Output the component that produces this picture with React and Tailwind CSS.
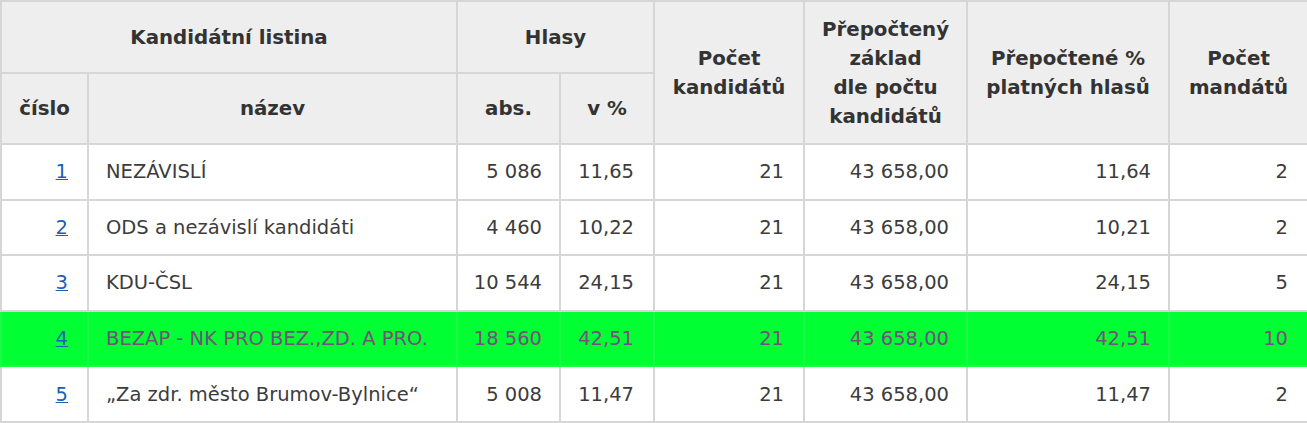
const rows = [
  { cislo: "1", nazev: "NEZÁVISLÍ", abs: "5 086", pct: "11,65", kand: "21", zaklad: "43 658,00", prep: "11,64", mand: "2" },
  { cislo: "2", nazev: "ODS a nezávislí kandidáti", abs: "4 460", pct: "10,22", kand: "21", zaklad: "43 658,00", prep: "10,21", mand: "2" },
  { cislo: "3", nazev: "KDU-ČSL", abs: "10 544", pct: "24,15", kand: "21", zaklad: "43 658,00", prep: "24,15", mand: "5" },
  { cislo: "4", nazev: "BEZAP - NK PRO BEZ.,ZD. A PRO.", abs: "18 560", pct: "42,51", kand: "21", zaklad: "43 658,00", prep: "42,51", mand: "10", win: true },
  { cislo: "5", nazev: "„Za zdr. město Brumov-Bylnice“", abs: "5 008", pct: "11,47", kand: "21", zaklad: "43 658,00", prep: "11,47", mand: "2" },
]

const th = "border-2 border-[#d6d6d6] bg-[#eeeeee] font-bold text-[#333] text-[19.8px] text-center align-middle px-2 leading-[29px]"

function App() {
  return (
    <div className="bg-white min-h-screen" style={{ fontFamily: '"DejaVu Sans", Verdana, sans-serif' }}>
      <table className="table-fixed border-collapse w-[1307px] text-[19.5px] border-2 border-[#e4e4e4]">
        <colgroup>
          <col className="w-[87px]" />
          <col className="w-[369px]" />
          <col className="w-[103px]" />
          <col className="w-[94px]" />
          <col className="w-[150px]" />
          <col className="w-[163px]" />
          <col className="w-[202px]" />
          <col className="w-[139px]" />
        </colgroup>
        <thead>
          <tr className="h-[72px]">
            <th colSpan={2} className={th}>Kandidátní listina</th>
            <th colSpan={2} className={th}>Hlasy</th>
            <th rowSpan={2} className={th}>Počet<br />kandidátů</th>
            <th rowSpan={2} className={th}>Přepočtený<br />základ<br />dle počtu<br />kandidátů</th>
            <th rowSpan={2} className={th}>Přepočtené %<br />platných hlasů</th>
            <th rowSpan={2} className={th}>Počet<br />mandátů</th>
          </tr>
          <tr className="h-[71px]">
            <th className={th}>číslo</th>
            <th className={th}>název</th>
            <th className={th}>abs.</th>
            <th className={th}>v %</th>
          </tr>
        </thead>
        <tbody>
          {rows.map((r) => {
            const td = r.win
              ? "border-2 border-[#1ef947] bg-[#00ff33] text-[#74507a] h-[55.6px] align-middle"
              : "border-2 border-[#d6d6d6] bg-white text-[#3c3c3c] h-[55.6px] align-middle"
            return (
              <tr key={r.cislo}>
                <td className={td + " text-right pr-[19px]"}>
                  <a href="#" className="text-[#1a5fb4] underline">{r.cislo}</a>
                </td>
                <td className={td + " text-left pl-[17px]"}>{r.nazev}</td>
                <td className={td + " text-right pr-[17px]"}>{r.abs}</td>
                <td className={td + " text-right pr-[19px]"}>{r.pct}</td>
                <td className={td + " text-right pr-[19px]"}>{r.kand}</td>
                <td className={td + " text-right pr-[17px]"}>{r.zaklad}</td>
                <td className={td + " text-right pr-[17px]"}>{r.prep}</td>
                <td className={td + " text-right pr-[19px]"}>{r.mand}</td>
              </tr>
            )
          })}
        </tbody>
      </table>
    </div>
  )
}

export default App
